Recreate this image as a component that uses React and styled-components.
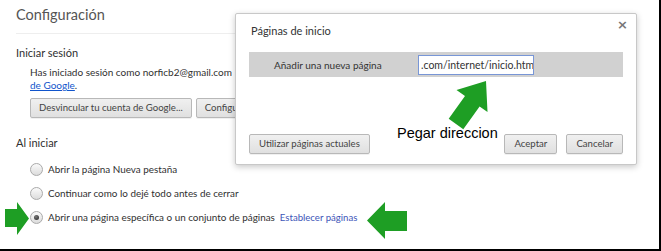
import React from 'react'
import styled, { createGlobalStyle } from 'styled-components'

const GlobalStyle = createGlobalStyle`
  html, body {
    margin: 0;
    padding: 0;
    background: #fff;
  }
  body {
    font-family: Lato, "Noto Sans", sans-serif;
    color: #303030;
  }
`

const Frame = styled.div`
  position: relative;
  width: 661px;
  height: 251px;
  box-sizing: border-box;
  border-right: 2px solid #000;
  border-bottom: 2px solid #000;
  padding: 4px 0 0 16px;
  overflow: hidden;
  background: #fff;
`

const PageTitle = styled.h1`
  margin: 0;
  width: 614px;
  font-size: 14.5px;
  line-height: 22px;
  font-weight: 400;
  color: #555;
  padding-bottom: 7px;
  border-bottom: 1px solid #eee;
`

const SectionTitle = styled.h3`
  margin: ${p => p.$top}px 0 0 0;
  font-size: 11px;
  line-height: 18px;
  font-weight: 400;
  color: #303030;
`

const Indent = styled.div`
  margin-left: 14px;
`

const AccountText = styled.p`
  margin: 4px 0 0 0;
  font-size: 10px;
  line-height: 13px;
  color: #303030;
  white-space: nowrap;
`

const Link = styled.a`
  color: ${p => (p.$plain ? '#3d55b8' : '#1155cc')};
  text-decoration: ${p => (p.$plain ? 'none' : 'underline')};
  cursor: pointer;
`

const ButtonRow = styled.div`
  display: flex;
  gap: 4px;
  margin-top: 6px;
`

const Button = styled.button`
  height: 20px;
  padding: 0 ${p => p.$pad || 8}px;
  box-sizing: border-box;
  font-family: inherit;
  font-size: 9.6px;
  line-height: 18px;
  color: #444;
  background: linear-gradient(#f0f0f0, #e0e0e0);
  border: 1px solid #b8b8b8;
  border-radius: 2px;
  box-shadow: 0 1px 0 rgba(0, 0, 0, 0.06);
  white-space: nowrap;
`

const RadioList = styled.div`
  margin-top: 5px;
  display: flex;
  flex-direction: column;
`

const RadioRow = styled.label`
  display: flex;
  align-items: center;
  gap: 5px;
  height: 24px;
  font-size: 9.9px;
  color: #303030;
  white-space: nowrap;
`

const Radio = styled.span`
  position: relative;
  width: 13px;
  height: 13px;
  box-sizing: border-box;
  border-radius: 50%;
  border: 1px solid #aaa;
  background: linear-gradient(#fafafa, #dcdcdc);
  flex: none;

  &::after {
    content: '';
    display: ${p => (p.$checked ? 'block' : 'none')};
    position: absolute;
    left: 3px;
    top: 3px;
    width: 5px;
    height: 5px;
    border-radius: 50%;
    background: radial-gradient(circle at 40% 35%, #777, #222);
  }
`

const SetLink = styled.span`
  margin-left: 0;
  font-size: 9.6px;
`

/* modal dialog over the settings page */
const Dialog = styled.div`
  position: absolute;
  left: 235px;
  top: 13px;
  width: 402px;
  height: 152px;
  box-sizing: border-box;
  background: #fff;
  border: 1px solid #c8c8c8;
  border-radius: 2px;
  box-shadow: 0 2px 6px rgba(0, 0, 0, 0.22);
  padding: 0 13px 10px 13px;
  display: flex;
  flex-direction: column;
`

const DialogTitle = styled.div`
  margin: 8px 0 12px 2px;
  font-size: 11px;
  line-height: 18px;
  color: #333;
`

const Close = styled.span`
  position: absolute;
  right: 8px;
  top: 3px;
  font-size: 13px;
  font-weight: 700;
  color: #777;
  font-family: "DejaVu Sans", sans-serif;
`

const AddBand = styled.div`
  display: flex;
  align-items: center;
  height: 25px;
  padding-left: 25px;
  background: #d1d1d1;
`

const AddLabel = styled.span`
  width: 144px;
  font-size: 10px;
  color: #333;
`

const UrlInput = styled.div`
  display: flex;
  align-items: center;
  width: 116px;
  height: 20px;
  box-sizing: border-box;
  padding: 0 2px;
  background: #fff;
  border: 1px solid #7896d6;
  font-size: 10.5px;
  color: #333;
  white-space: nowrap;
  overflow: hidden;
`

const Caret = styled.span`
  display: inline-block;
  width: 2px;
  height: 12px;
  margin-left: 1px;
  background: #111;
`

const Footer = styled.div`
  margin-top: auto;
  display: flex;
  align-items: center;
`

const Spacer = styled.div`
  flex: 1;
`

const FooterGap = styled.div`
  width: 9px;
`

const Note = styled.div`
  position: absolute;
  left: 397px;
  top: 124px;
  font-family: "Liberation Sans", Arial, sans-serif;
  font-size: 14.5px;
  line-height: 18px;
  color: #000;
`

const Arrow = styled.svg`
  position: absolute;
  left: ${p => p.$x}px;
  top: ${p => p.$y}px;
  overflow: visible;
`

const GREEN = '#1e9e24'

export default function App() {
  return (
    <>
      <GlobalStyle />
      <Frame>
        <PageTitle>Configuración</PageTitle>

        <SectionTitle $top={10}>Iniciar sesión</SectionTitle>
        <Indent>
          <AccountText>
            Has iniciado sesión como norficb2@gmail.com
            <br />
            <Link>de Google</Link>.
          </AccountText>
          <ButtonRow>
            <Button>Desvincular tu cuenta de Google...</Button>
            <Button>Configuración avanzada de sincronización...</Button>
          </ButtonRow>
        </Indent>

        <SectionTitle $top={16}>Al iniciar</SectionTitle>
        <Indent>
          <RadioList>
            <RadioRow>
              <Radio />
              Abrir la página Nueva pestaña
            </RadioRow>
            <RadioRow>
              <Radio />
              Continuar como lo dejé todo antes de cerrar
            </RadioRow>
            <RadioRow>
              <Radio $checked />
              Abrir una página específica o un conjunto de páginas
              <SetLink>
                <Link $plain>Establecer páginas</Link>
              </SetLink>
            </RadioRow>
          </RadioList>
        </Indent>

        <Dialog>
          <Close>×</Close>
          <DialogTitle>Páginas de inicio</DialogTitle>
          <AddBand>
            <AddLabel>Añadir una nueva página</AddLabel>
            <UrlInput>
              .com/internet/inicio.htm
              <Caret />
            </UrlInput>
          </AddBand>
          <Footer>
            <Button $pad={9}>Utilizar páginas actuales</Button>
            <Spacer />
            <Button $pad={9}>Aceptar</Button>
            <FooterGap />
            <Button $pad={9}>Cancelar</Button>
          </Footer>
        </Dialog>

        <Arrow $x={440} $y={76} width="56" height="56">
          <polygon
            points="23.3,53.2 39.6,30.4 47.5,36 46,5 16.5,14 25,20 8.7,42.8"
            fill={GREEN}
          />
        </Arrow>
        <Note>Pegar direccion</Note>

        <Arrow $x={4} $y={201} width="27" height="35">
          <polygon points="1,8 13,8 13,1 25,17.5 13,34 13,26 1,26" fill={GREEN} />
        </Arrow>
        <Arrow $x={366} $y={201} width="42" height="39">
          <polygon points="1,19.5 19,1 19,10 41,10 41,30 19,30 19,38" fill={GREEN} />
        </Arrow>
      </Frame>
    </>
  )
}
